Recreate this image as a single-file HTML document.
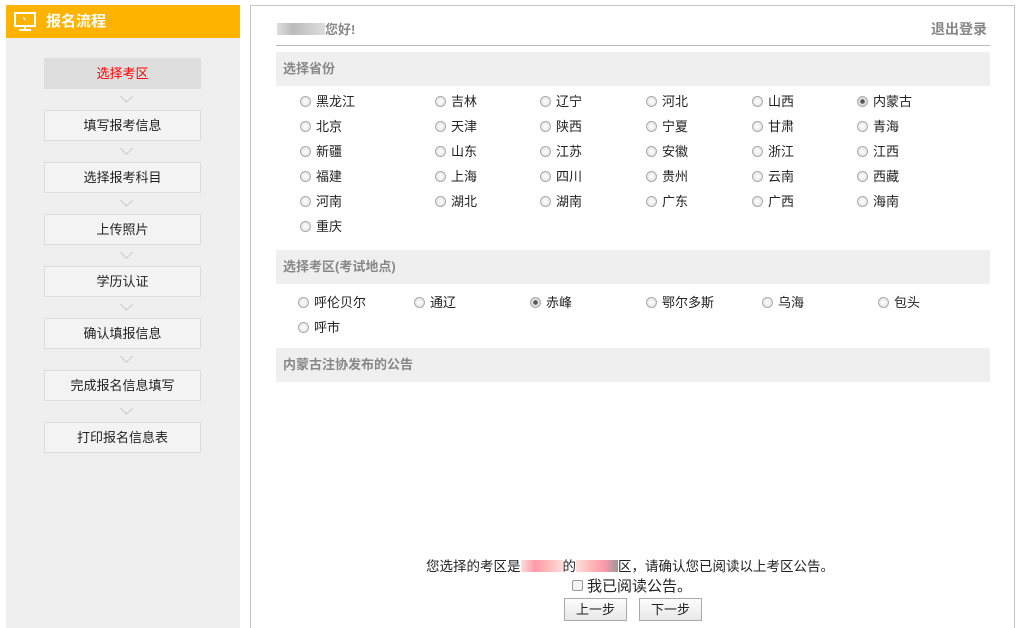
<!DOCTYPE html><html style="height:628px;overflow:hidden"><head><meta charset="utf-8"><style>
*{margin:0;padding:0;box-sizing:border-box}
body{width:1021px;height:628px;background:#fff;font-family:"Liberation Sans","Noto Sans CJK SC",sans-serif;font-size:13px;color:#222;position:relative;overflow:hidden}
.a{position:absolute}
.side{left:6px;top:5px;width:234px;height:623px;background:#efefef}
.hd{left:6px;top:5px;width:234px;height:33px;background:#fdb300;color:#fff;font-weight:bold;font-size:15px;line-height:33px;padding-left:40px}
.step{left:44px;width:157px;height:31px;border:1px solid #ddd;background:#f3f3f3;text-align:center;line-height:29px;font-size:13px}
.chev{left:122px;width:9px;height:9px;border-right:1.5px solid #c8c8c8;border-bottom:1.5px solid #c8c8c8;transform:rotate(45deg)}
.main{left:250px;top:5px;width:765px;height:623px;border:1px solid #c4c4c4;border-bottom:none}
.sec{left:276px;width:714px;height:34px;background:#efefef;color:#888;font-weight:bold;line-height:34px;padding-left:7px}
.r{position:absolute;font-size:13px;line-height:16px;white-space:nowrap}
.r i{display:inline-block;width:11px;height:11px;border-radius:50%;border:1px solid #aaa;background:radial-gradient(#fff,#ddd);vertical-align:-1px;margin-right:5px}
.r i.on{background:radial-gradient(#555 30%,#ddd 40%)}
.btn{top:598px;height:23px;width:63px;border:1px solid #aaa;background:linear-gradient(#fdfdfd,#e8e8e8);text-align:center;line-height:21px}
.blur{display:inline-block;height:12px;vertical-align:-1px}
</style></head><body>
<div class="a side"></div>
<div class="a hd">报名流程</div>
<svg class="a" style="left:14px;top:12px" width="22" height="20" viewBox="0 0 22 20"><rect x="1" y="1" width="20" height="13" fill="none" stroke="#fff" stroke-width="2"/><path d="M11 14v3M5 18h12" stroke="#fff" stroke-width="2"/><path d="M9 5l2 2-1 1" stroke="#fff" fill="none"/></svg>
<div class="a step" style="top:58px;background:#dedede;border-color:#dedede;color:#f00">选择考区</div>
<div class="a chev" style="top:92px"></div>
<div class="a step" style="top:110px">填写报考信息</div>
<div class="a chev" style="top:144px"></div>
<div class="a step" style="top:162px">选择报考科目</div>
<div class="a chev" style="top:196px"></div>
<div class="a step" style="top:214px">上传照片</div>
<div class="a chev" style="top:248px"></div>
<div class="a step" style="top:266px">学历认证</div>
<div class="a chev" style="top:300px"></div>
<div class="a step" style="top:318px">确认填报信息</div>
<div class="a chev" style="top:352px"></div>
<div class="a step" style="top:370px">完成报名信息填写</div>
<div class="a chev" style="top:404px"></div>
<div class="a step" style="top:422px">打印报名信息表</div>

<div class="a main"></div>
<div class="a" style="left:277px;top:19px;color:#888;font-weight:bold;font-size:13px"><span class="blur" style="width:48px;background:linear-gradient(90deg,#ddd,#bbb,#ccc,#ddd)"></span>您好!</div>
<div class="a" style="left:931px;top:19px;color:#888;font-weight:bold;font-size:14px">退出登录</div>
<div class="a" style="left:276px;top:45px;width:714px;height:1px;background:#bbb"></div>
<div class="a sec" style="top:52px">选择省份</div>
<div class="a sec" style="top:250px">选择考区(考试地点)</div>
<div class="a sec" style="top:348px">内蒙古注协发布的公告</div>

<div class="r" style="left:300px;top:94px"><i></i>黑龙江</div><div class="r" style="left:435px;top:94px"><i></i>吉林</div><div class="r" style="left:540px;top:94px"><i></i>辽宁</div><div class="r" style="left:646px;top:94px"><i></i>河北</div><div class="r" style="left:752px;top:94px"><i></i>山西</div><div class="r" style="left:857px;top:94px"><i class="on"></i>内蒙古</div>
<div class="r" style="left:300px;top:119px"><i></i>北京</div><div class="r" style="left:435px;top:119px"><i></i>天津</div><div class="r" style="left:540px;top:119px"><i></i>陕西</div><div class="r" style="left:646px;top:119px"><i></i>宁夏</div><div class="r" style="left:752px;top:119px"><i></i>甘肃</div><div class="r" style="left:857px;top:119px"><i></i>青海</div>
<div class="r" style="left:300px;top:144px"><i></i>新疆</div><div class="r" style="left:435px;top:144px"><i></i>山东</div><div class="r" style="left:540px;top:144px"><i></i>江苏</div><div class="r" style="left:646px;top:144px"><i></i>安徽</div><div class="r" style="left:752px;top:144px"><i></i>浙江</div><div class="r" style="left:857px;top:144px"><i></i>江西</div>
<div class="r" style="left:300px;top:169px"><i></i>福建</div><div class="r" style="left:435px;top:169px"><i></i>上海</div><div class="r" style="left:540px;top:169px"><i></i>四川</div><div class="r" style="left:646px;top:169px"><i></i>贵州</div><div class="r" style="left:752px;top:169px"><i></i>云南</div><div class="r" style="left:857px;top:169px"><i></i>西藏</div>
<div class="r" style="left:300px;top:194px"><i></i>河南</div><div class="r" style="left:435px;top:194px"><i></i>湖北</div><div class="r" style="left:540px;top:194px"><i></i>湖南</div><div class="r" style="left:646px;top:194px"><i></i>广东</div><div class="r" style="left:752px;top:194px"><i></i>广西</div><div class="r" style="left:857px;top:194px"><i></i>海南</div>
<div class="r" style="left:300px;top:219px"><i></i>重庆</div>

<div class="r" style="left:298px;top:295px"><i></i>呼伦贝尔</div><div class="r" style="left:414px;top:295px"><i></i>通辽</div><div class="r" style="left:530px;top:295px"><i class="on"></i>赤峰</div><div class="r" style="left:646px;top:295px"><i></i>鄂尔多斯</div><div class="r" style="left:762px;top:295px"><i></i>乌海</div><div class="r" style="left:878px;top:295px"><i></i>包头</div>
<div class="r" style="left:298px;top:320px"><i></i>呼市</div>

<div class="a" style="left:0;width:1260px;top:555px;text-align:center;font-size:13.5px">您选择的考区是<span class="blur" style="width:42px;background:linear-gradient(90deg,#fdd,#f9a,#fbb,#fdd)"></span>的<span class="blur" style="width:42px;background:linear-gradient(90deg,#fdd,#fbb,#f9a,#999)"></span>区，请确认您已阅读以上考区公告。</div>
<div class="a" style="left:572px;top:575px;font-size:15px"><span style="display:inline-block;width:11px;height:11px;border:1px solid #999;border-radius:2px;background:#f4f4f4;margin-right:4px"></span>我已阅读公告。</div>
<div class="a btn" style="left:564px">上一步</div>
<div class="a btn" style="left:639px">下一步</div>
</body></html>
